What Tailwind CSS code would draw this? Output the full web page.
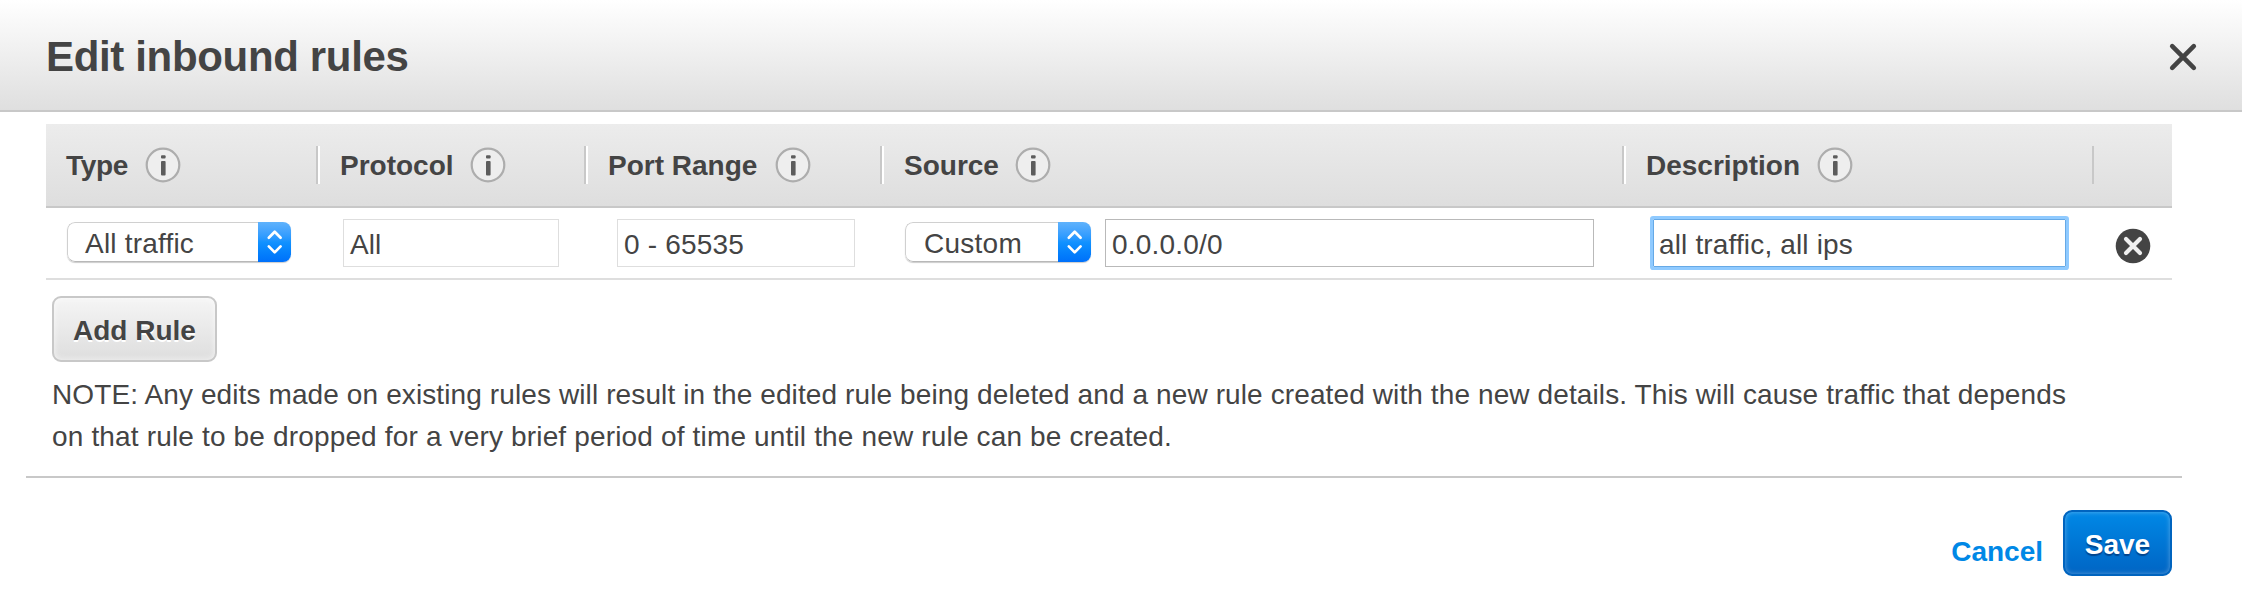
<!DOCTYPE html>
<html lang="en">
<head>
<meta charset="utf-8">
<title>Edit inbound rules</title>
<script src="https://cdn.jsdelivr.net/npm/@tailwindcss/browser@4"></script>
</head>
<body class="w-[2242px] h-[612px] overflow-hidden bg-white text-[#444] text-[28px] leading-[42px] font-['Liberation_Sans',Arial,sans-serif]">
<svg class="hidden">
  <symbol id="info" viewBox="0 0 36 36">
    <circle cx="18" cy="18" r="16.3" fill="#eeeeee" stroke="#adadad" stroke-width="2.2"/>
    <rect x="16" y="8.2" width="4.6" height="3.4" rx="1" fill="#5c5c5c"/>
    <rect x="16" y="14" width="4.6" height="14.4" rx="1" fill="#5c5c5c"/>
  </symbol>
  <symbol id="arrows" viewBox="0 0 33 40">
    <path d="M10.8 15.8 16.7 9.8 22.6 15.8M10.8 24.4 16.7 30.4 22.6 24.4" fill="none" stroke="#fff" stroke-width="2.7" stroke-linecap="round" stroke-linejoin="round"/>
  </symbol>
</svg>

<header class="flex h-[112px] items-center justify-between border-b-2 border-[#c8c8c8] bg-linear-to-b from-white to-[#dfdfdf] pl-[46px] pr-[44px]">
  <h1 class="text-[42px] leading-[50px] font-bold tracking-[-0.34px] pt-[4px]">Edit inbound rules</h1>
  <svg class="h-[30px] w-[30px] mt-[4px]" viewBox="0 0 30 30"><path d="M4.2 4.2 25.8 25.8M25.8 4.2 4.2 25.8" stroke="#444" stroke-width="4.6" stroke-linecap="round"/></svg>
</header>

<main class="ml-[46px] mt-[12px] w-[2126px]">
  <div class="flex h-[84px] items-center border-b-2 border-[#c8c8c8] bg-linear-to-b from-[#ececec] to-[#dedede] font-bold">
    <div class="flex h-[38px] w-[272px] items-center border-r-2 border-[#c8c8c8] pl-[20px]"><span class="w-[79px] pt-[2px] tracking-[-0.3px]">Type</span><svg class="size-[36px]"><use href="#info"/></svg></div>
    <div class="flex h-[38px] w-[268px] items-center border-r-2 border-l-2 border-l-white border-r-[#c8c8c8] pl-[20px]"><span class="w-[130px] pt-[2px]">Protocol</span><svg class="size-[36px]"><use href="#info"/></svg></div>
    <div class="flex h-[38px] w-[296px] items-center border-r-2 border-l-2 border-l-white border-r-[#c8c8c8] pl-[20px]"><span class="w-[167px] pt-[2px]">Port Range</span><svg class="size-[36px]"><use href="#info"/></svg></div>
    <div class="flex h-[38px] w-[742px] items-center border-r-2 border-l-2 border-l-white border-r-[#c8c8c8] pl-[20px]"><span class="w-[111px] pt-[2px]">Source</span><svg class="size-[36px]"><use href="#info"/></svg></div>
    <div class="flex h-[38px] w-[470px] items-center border-r-2 border-l-2 border-l-white border-r-[#c8c8c8] pl-[20px]"><span class="w-[171px] pt-[2px]">Description</span><svg class="size-[36px]"><use href="#info"/></svg></div>
  </div>

  <div class="flex h-[72px] items-start border-b-2 border-[#dedede] pt-[11px]">
    <div class="mt-[3px] ml-[21px] flex h-[40px] w-[224px] overflow-hidden rounded-[8px] shadow-[0_1px_1px_rgba(0,0,0,0.2)]">
      <div class="flex h-full w-[191px] items-center rounded-l-[8px] border border-r-0 border-[#d0d0d0] border-b-[#b8b8b8] pt-[4px] pl-[17px] tracking-[0.2px]">All traffic</div>
      <div class="h-full w-[33px] bg-linear-to-b from-[#5fb2fc] via-[#1292ff] to-[#0070fa]"><svg class="h-[40px] w-[33px]"><use href="#arrows"/></svg></div>
    </div>
    <div class="ml-[52px] flex h-[48px] w-[216px] items-center border border-[#dedede] pt-[4px] pl-[6px]">All</div>
    <div class="ml-[58px] flex h-[48px] w-[238px] items-center border border-[#dedede] pt-[4px] pl-[6px] tracking-[0.2px]">0 - 65535</div>
    <div class="mt-[3px] ml-[50px] flex h-[40px] w-[186px] overflow-hidden rounded-[8px] shadow-[0_1px_1px_rgba(0,0,0,0.2)]">
      <div class="flex h-full w-[153px] items-center rounded-l-[8px] border border-r-0 border-[#d0d0d0] border-b-[#b8b8b8] pt-[4px] pl-[18px] tracking-[0.25px]">Custom</div>
      <div class="h-full w-[33px] bg-linear-to-b from-[#5fb2fc] via-[#1292ff] to-[#0070fa]"><svg class="h-[40px] w-[33px]"><use href="#arrows"/></svg></div>
    </div>
    <div class="ml-[14px] flex h-[48px] w-[489px] items-center border border-[#b9b9b9] pt-[4px] pl-[6px] tracking-[0.2px]">0.0.0.0/0</div>
    <div class="ml-[59px] flex h-[48px] w-[413px] items-center rounded-[1px] border border-[#66a9e6] pt-[4px] pl-[5px] tracking-[0.15px] shadow-[0_0_0_3px_#8fcaff]">all traffic, all ips</div>
    <svg class="mt-[9px] ml-[49px] size-[36px]" viewBox="0 0 36 36"><circle cx="18" cy="18" r="17.3" fill="#444"/><path d="M11 11 25 25M25 11 11 25" stroke="#f0f0f0" stroke-width="4.2" stroke-linecap="round"/></svg>
  </div>

  <button class="mt-[16px] ml-[6px] block h-[66px] w-[165px] rounded-[9px] border-2 border-[#c8c8c8] bg-linear-to-b from-[#f5f5f5] to-[#dedede] pt-[3px] font-bold shadow-[inset_0_0_6px_rgba(255,255,255,0.7)] [text-shadow:0_2px_0_#fff]">Add Rule</button>

  <p class="mt-[12px] ml-[6px] whitespace-nowrap"><span class="tracking-[0.11px]">NOTE: Any edits made on existing rules will result in the edited rule being deleted and a new rule created with the new details. This will cause traffic that depends</span><br><span class="tracking-[0.16px]">on that rule to be dropped for a very brief period of time until the new rule can be created.</span></p>
</main>

<footer class="mt-[18px] ml-[26px] flex h-[102px] w-[2156px] items-end justify-end border-t-2 border-[#c8c8c8] pr-[10px] pb-[2px] font-bold">
  <a class="mr-[20px] mb-[3px] text-[#0088e6]">Cancel</a>
  <button class="h-[66px] w-[109px] rounded-[9px] border-2 border-[#0064bf] bg-linear-to-b from-[#0088e6] to-[#0065c4] pt-[3px] font-bold text-white shadow-[inset_0_0_5px_rgba(255,255,255,0.35)] [text-shadow:0_2px_1px_rgba(0,40,100,0.6)]">Save</button>
</footer>
</body>
</html>
